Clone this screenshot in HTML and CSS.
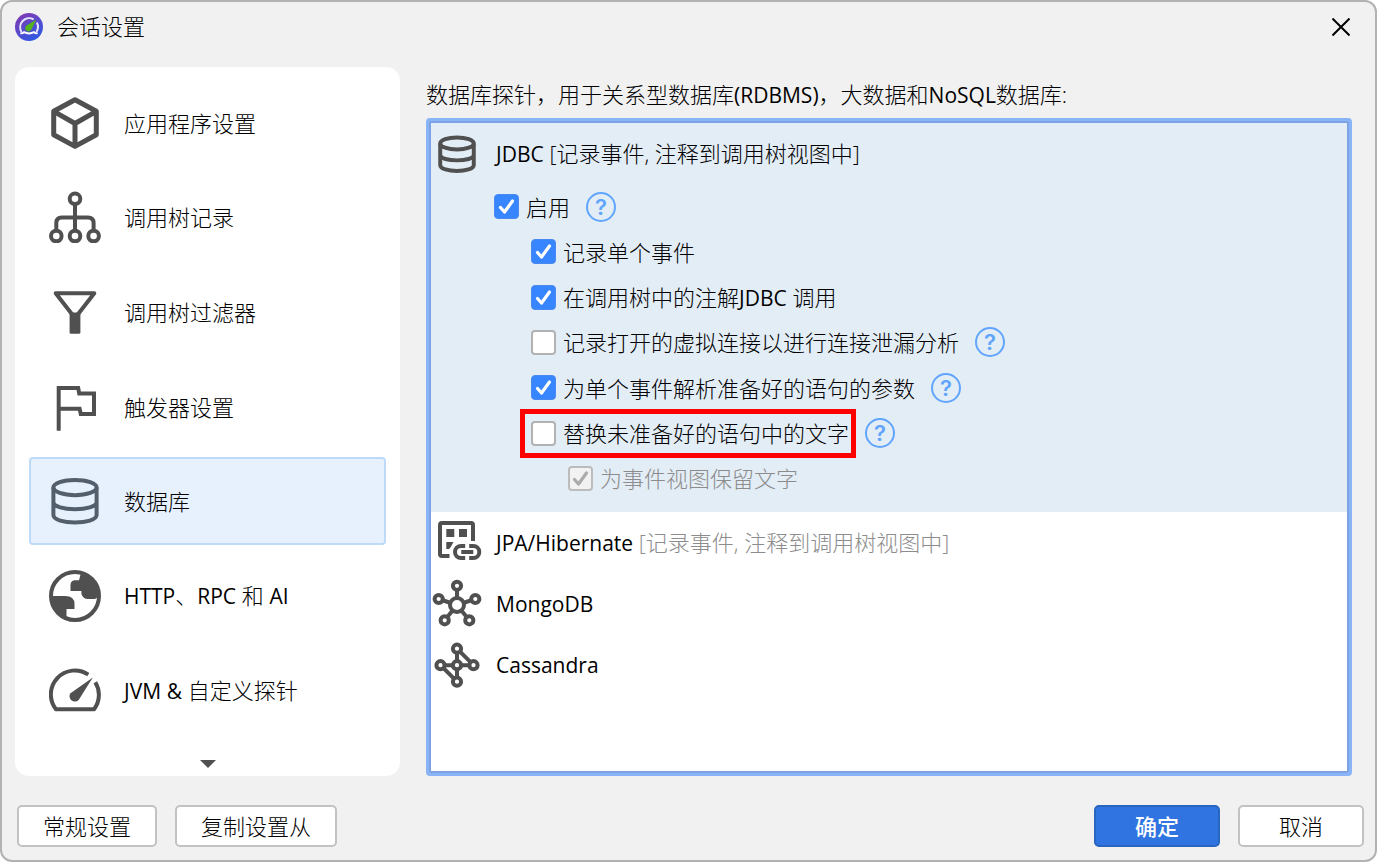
FILE: index.html
```html
<!DOCTYPE html>
<html lang="zh-CN">
<head>
    <meta charset="UTF-8">
    <meta name="viewport" content="width=device-width, initial-scale=1.0">
    <title>会话设置</title>
    <link rel="stylesheet" href="styles.css">
</head>
<body>
    <div class="dialog">
        <header class="title-bar">
            <svg class="logo" viewBox="0 0 28 28" aria-hidden="true">
                <defs>
                    <linearGradient id="logo-fill" x1="0" y1="0" x2="0.6" y2="1">
                        <stop offset="0" stop-color="#8a35b0"/>
                        <stop offset="1" stop-color="#3159e2"/>
                    </linearGradient>
                </defs>
                <circle cx="14" cy="14" r="14" fill="url(#logo-fill)"/>
                <path d="M18.6 6.3A9 9 0 0 0 6.6 19M21.8 9.6A9 9 0 0 1 21.4 19" fill="none" stroke="#e4e4f8" stroke-width="2"/>
                <path d="M5.4 20.3Q7.4 20.6 9 19.2Q14 21.6 19 19.2Q20.6 20.6 22.6 20.3" fill="none" stroke="#fff" stroke-width="2"/>
                <path d="M21.4 6.6L11.6 12.6a3.2 3.2 0 1 0 4.6 4.2z" fill="#55b41c"/>
            </svg>
            <h1 class="title">会话设置</h1>
            <button class="close" type="button" aria-label="关闭">
                <svg viewBox="0 0 18 18"><path d="M0.5 0.5L17.5 17.5M17.5 0.5L0.5 17.5"/></svg>
            </button>
        </header>

        <main class="content">
            <!-- 左侧导航 -->
            <nav class="sidebar">
                <a class="nav-item" href="#">
                    <svg class="icon" viewBox="0 0 52 52">
                        <path stroke-width="5" d="M26 2.7L47.3 14.3V37.8L26 49.4L4.7 37.8V14.3ZM4.7 14.3L26 26.5L47.3 14.3M26 26.5V49.4"/>
                    </svg>
                    应用程序设置
                </a>
                <a class="nav-item" href="#">
                    <svg class="icon" viewBox="0 0 52 52">
                        <path d="M26 13V40M7.3 40V32Q7.3 26.5 12.8 26.5H39Q44.6 26.5 44.6 32V40"/>
                        <circle cx="26" cy="7.8" r="5.3"/>
                        <circle cx="7.3" cy="45" r="5.3"/>
                        <circle cx="26" cy="45" r="5.3"/>
                        <circle cx="44.6" cy="45" r="5.3"/>
                    </svg>
                    调用树记录
                </a>
                <a class="nav-item" href="#">
                    <svg class="icon" viewBox="0 0 52 52">
                        <path d="M6.7 7.2H45.3L28 29.5H24Z"/>
                        <rect class="solid" x="20.6" y="26.5" width="10.8" height="21.3" rx="1.5"/>
                    </svg>
                    调用树过滤器
                </a>
                <a class="nav-item" href="#">
                    <svg class="icon sharp" viewBox="0 0 52 52">
                        <path d="M9.7 49.7V7H29.2L30.2 12.6H45V33H31.8L30.6 27.8H9.7"/>
                    </svg>
                    触发器设置
                </a>
                <a class="nav-item selected" href="#" aria-current="page">
                    <svg class="icon" viewBox="0 0 52 52">
                        <ellipse cx="26" cy="12.6" rx="21.6" ry="7.6"/>
                        <path d="M4.4 12.6V40C4.4 50 47.6 50 47.6 40V12.6M4.4 27C4.4 36.5 47.6 36.5 47.6 27"/>
                    </svg>
                    数据库
                </a>
                <a class="nav-item" href="#">
                    <svg class="icon" viewBox="0 0 52 52">
                        <circle cx="26" cy="26" r="24"/>
                        <path class="solid" d="M1.5 26H16Q25.5 26 25.5 34V39H17.5V50A25 25 0 0 1 1.5 26ZM31.8 3.5L30 10.3H25.5Q21.5 11 21.5 15V21H32.4V24Q34 29 39 29H46L50.5 26A24.5 24.5 0 0 0 31.8 3.5Z"/>
                    </svg>
                    <span><span class="latin">HTTP</span>、<span class="latin">RPC</span> 和 <span class="latin">AI</span></span>
                </a>
                <a class="nav-item" href="#">
                    <svg class="icon" viewBox="0 0 52 52">
                        <path d="M39.3 10.6A24 24 0 0 0 6.9 45.2H45.1A24 24 0 0 0 46.3 18.2"/>
                        <path class="solid" d="M43.8 13.4L21.5 29.2A5.2 5.2 0 1 0 30 35.4Z"/>
                    </svg>
                    <span><span class="latin">JVM</span> <span class="latin">&amp;</span> 自定义探针</span>
                </a>
                <button class="scroll-down" type="button" aria-label="向下滚动"></button>
            </nav>

            <!-- 数据库探针 -->
            <section class="panel">
                <h2 class="caption">数据库探针，用于关系型数据库<span class="latin">(RDBMS)</span>，大数据和<span class="latin">NoSQL</span>数据库:</h2>
                <ul class="probes">
                    <li class="probe active">
                        <div class="probe-head">
                            <svg class="icon small" viewBox="-7 -7 66 66">
                                <ellipse cx="26" cy="12.6" rx="21.3" ry="7.6"/>
                                <path d="M4.7 12.6V40C4.7 50 47.3 50 47.3 40V12.6M4.7 27C4.7 36.5 47.3 36.5 47.3 27"/>
                            </svg>
                            <span><span class="latin">JDBC</span> [记录事件, 注释到调用树视图中]</span>
                        </div>
                        <div class="options">
                            <div class="option">
                                <label><input type="checkbox" checked>启用</label>
                                <button class="help" type="button">?</button>
                            </div>
                            <div class="option level-2">
                                <label><input type="checkbox" checked>记录单个事件</label>
                            </div>
                            <div class="option level-2">
                                <label><input type="checkbox" checked><span>在调用树中的注解<span class="latin">JDBC</span> 调用</span></label>
                            </div>
                            <div class="option level-2">
                                <label><input type="checkbox">记录打开的虚拟连接以进行连接泄漏分析</label>
                                <button class="help" type="button">?</button>
                            </div>
                            <div class="option level-2">
                                <label><input type="checkbox" checked>为单个事件解析准备好的语句的参数</label>
                                <button class="help" type="button">?</button>
                            </div>
                            <div class="option level-2">
                                <label class="highlight"><input type="checkbox">替换未准备好的语句中的文字</label>
                                <button class="help" type="button">?</button>
                            </div>
                            <div class="option level-3">
                                <label class="disabled"><input type="checkbox" checked disabled>为事件视图保留文字</label>
                            </div>
                        </div>
                    </li>
                    <li class="probe">
                        <div class="probe-head">
                            <svg class="icon" viewBox="0 0 52 52">
                                <path d="M18.5 39H11Q9 39 9 37V8Q9 6 11 6H40Q42 6 42 8V24"/>
                                <path class="solid" d="M15.3 12h8v8h-8zM28 12h8v8h-8zM15.3 25H22.5L19.8 30L18 32H15.3z"/>
                                <path d="M34.2 29H30A6 6 0 0 0 30 41H34.2M38.2 29H42.3A6 6 0 0 1 42.3 41H38.2M30.3 35H42.3"/>
                            </svg>
                            <span><span class="latin">JPA/Hibernate</span> <span class="note">[记录事件, 注释到调用树视图中]</span></span>
                        </div>
                    </li>
                    <li class="probe">
                        <div class="probe-head">
                            <svg class="icon" viewBox="0 0 52 52">
                                <path d="M26 27V8M26 27L7.7 21M26 27L44.3 21M26 27L13.7 42.3M26 27L38.3 42.3"/>
                                <circle cx="26" cy="27" r="7"/>
                                <circle cx="26" cy="7.8" r="4.1"/>
                                <circle cx="7.7" cy="21" r="4.1"/>
                                <circle cx="44.3" cy="21" r="4.1"/>
                                <circle cx="13.7" cy="42.3" r="4.1"/>
                                <circle cx="38.3" cy="42.3" r="4.1"/>
                            </svg>
                            <span class="latin">MongoDB</span>
                        </div>
                    </li>
                    <li class="probe">
                        <div class="probe-head">
                            <svg class="icon" viewBox="0 0 52 52">
                                <path d="M26 9.7V42.7M9.5 26.2H42.5M26 9.7L42.5 26.2M9.5 26.2L26 42.7"/>
                                <circle cx="26" cy="26.2" r="4.1"/>
                                <circle cx="26" cy="9.7" r="4.1"/>
                                <circle cx="9.5" cy="26.2" r="4.1"/>
                                <circle cx="42.5" cy="26.2" r="4.1"/>
                                <circle cx="26" cy="42.7" r="4.1"/>
                            </svg>
                            <span class="latin">Cassandra</span>
                        </div>
                    </li>
                </ul>
            </section>
        </main>

        <footer class="buttons">
            <button class="btn" type="button">常规设置</button>
            <button class="btn" type="button">复制设置从</button>
            <button class="btn primary" type="button">确定</button>
            <button class="btn" type="button">取消</button>
        </footer>
    </div>
</body>
</html>
```
FILE: styles.css
```css
* {
    box-sizing: border-box;
}

body {
    margin: 0;
    background: #fff;
    color: #000;
    font-family: "Open Sans", "Noto Sans CJK SC", sans-serif;
    font-size: 22px;
    font-weight: 300;
    line-height: 30px;
}

button {
    font: inherit;
    color: inherit;
    padding: 0;
    border: 0;
    background: none;
}

.latin {
    font-size: 21px;
    font-weight: 400;
}

.dialog {
    display: flex;
    flex-direction: column;
    min-height: 100vh;
    border: 2px solid #b2b2b2;
    border-radius: 12px;
    background: #f1f1f1;
}

/* 标题栏 */
.title-bar {
    display: flex;
    align-items: center;
    gap: 14px;
    height: 65px;
    padding: 0 25px 15px 13px;
}

.logo {
    width: 28px;
    height: 28px;
}

.title {
    flex: 1;
    margin: 0;
    padding-bottom: 2px;
    font-size: 22px;
    font-weight: 300;
}

.close svg {
    display: block;
    width: 18px;
    height: 18px;
    stroke: #000;
    stroke-width: 2;
}

/* 主体 */
.content {
    flex: 1;
    display: flex;
    gap: 26px;
    padding: 0 23px 0 13px;
}

.sidebar {
    display: flex;
    flex-direction: column;
    gap: 7px;
    width: 385px;
    padding: 12px 14px 0;
    border-radius: 14px;
    background: #fff;
}

.nav-item {
    flex: 1;
    display: flex;
    align-items: center;
    gap: 23px;
    padding: 0 18px;
    border: 2px solid transparent;
    border-radius: 4px;
    color: #000;
    text-decoration: none;
}

.nav-item.selected {
    border-color: #bedaf9;
    background: #e7f1fe;
}

.icon {
    flex: none;
    width: 52px;
    height: 52px;
    fill: none;
    stroke: #505050;
    stroke-width: 4;
    stroke-linejoin: round;
}

.icon.sharp {
    stroke-linejoin: miter;
}

.icon.small {
    stroke-width: 5;
}

.icon circle {
    fill: #fff;
}

.icon .solid {
    fill: #505050;
    stroke: none;
}

.selected .icon {
    stroke: #535f6c;
}

.scroll-down {
    height: 35px;
    display: flex;
    justify-content: center;
    padding-top: 19px;
}

.scroll-down::before {
    content: "";
    border: 8px solid transparent;
    border-top-color: #505050;
    border-bottom: 0;
}

.panel {
    flex: 1;
    display: flex;
    flex-direction: column;
}

.caption {
    margin: 0;
    padding: 12px 0 8px;
    font-size: 22px;
    font-weight: 300;
}

.probes {
    flex: 1;
    margin: 0;
    padding: 2px;
    list-style: none;
    border: 3px solid #8ab4f8;
    border-radius: 4px;
    outline: 2px solid #7da3e4;
    outline-offset: -5px;
    background: #fff;
}

.probe-head {
    display: flex;
    align-items: center;
    gap: 13px;
    height: 61px;
}

.probe.active {
    display: flex;
    flex-direction: column;
    min-height: 389px;
    padding-bottom: 11px;
    background: #e3edf6;
}

.note {
    color: #8c8c8c;
}

/* 选项 */
.options {
    flex: 1;
    display: grid;
    grid-auto-rows: 1fr;
    padding-left: 63px;
}

.option {
    display: flex;
    align-items: center;
    gap: 16px;
}

.level-2 {
    padding-left: 37px;
}

.level-3 {
    padding-left: 74px;
}

.option label {
    display: flex;
    align-items: center;
    gap: 7px;
}

.option input {
    appearance: none;
    width: 25px;
    height: 25px;
    margin: 0;
    border: 2px solid #b2b2b2;
    border-radius: 4px;
    background: #fff center / 25px no-repeat;
}

.option input:checked {
    border: 1px solid #4a8af0;
    background-color: #3785ff;
    background-image: url("data:image/svg+xml,%3Csvg xmlns='http://www.w3.org/2000/svg' viewBox='0 0 25 25'%3E%3Cpath d='M6.5 13.5L10.5 18L18.5 7' fill='none' stroke='%23fff' stroke-width='3.2' stroke-linecap='round' stroke-linejoin='round'/%3E%3C/svg%3E");
}

.option input:disabled {
    border: 2px solid #bcbcbc;
    background-color: #f2f2f2;
    background-image: url("data:image/svg+xml,%3Csvg xmlns='http://www.w3.org/2000/svg' viewBox='0 0 25 25'%3E%3Cpath d='M6.5 13.5L10.5 18L18.5 7' fill='none' stroke='%23ababab' stroke-width='3.2' stroke-linecap='round' stroke-linejoin='round'/%3E%3C/svg%3E");
}

.option .disabled {
    color: #8c8c8c;
}

.option .highlight {
    position: relative;
}

.highlight::after {
    content: "";
    position: absolute;
    inset: -9px -7px -10px -11px;
    border: 5px solid #f00;
    pointer-events: none;
}

.help {
    width: 30px;
    height: 30px;
    border: 2px solid #61a5fc;
    border-radius: 50%;
    color: #61a5fc;
    font-family: Inter, sans-serif;
    font-size: 22px;
    font-weight: 600;
    line-height: 26px;
}

/* 底部按钮 */
.buttons {
    display: flex;
    align-items: flex-start;
    gap: 18px;
    height: 84px;
    padding: 29px 11px 0 15px;
}

.btn {
    min-width: 126px;
    height: 42px;
    padding: 0 24px;
    border: 2px solid #c2c2c2;
    border-radius: 5px;
    background: #fff;
}

.btn.primary {
    margin-left: auto;
    border-color: #2a65c0;
    background: #2f74e0;
    color: #fff;
    font-weight: 500;
}
```
